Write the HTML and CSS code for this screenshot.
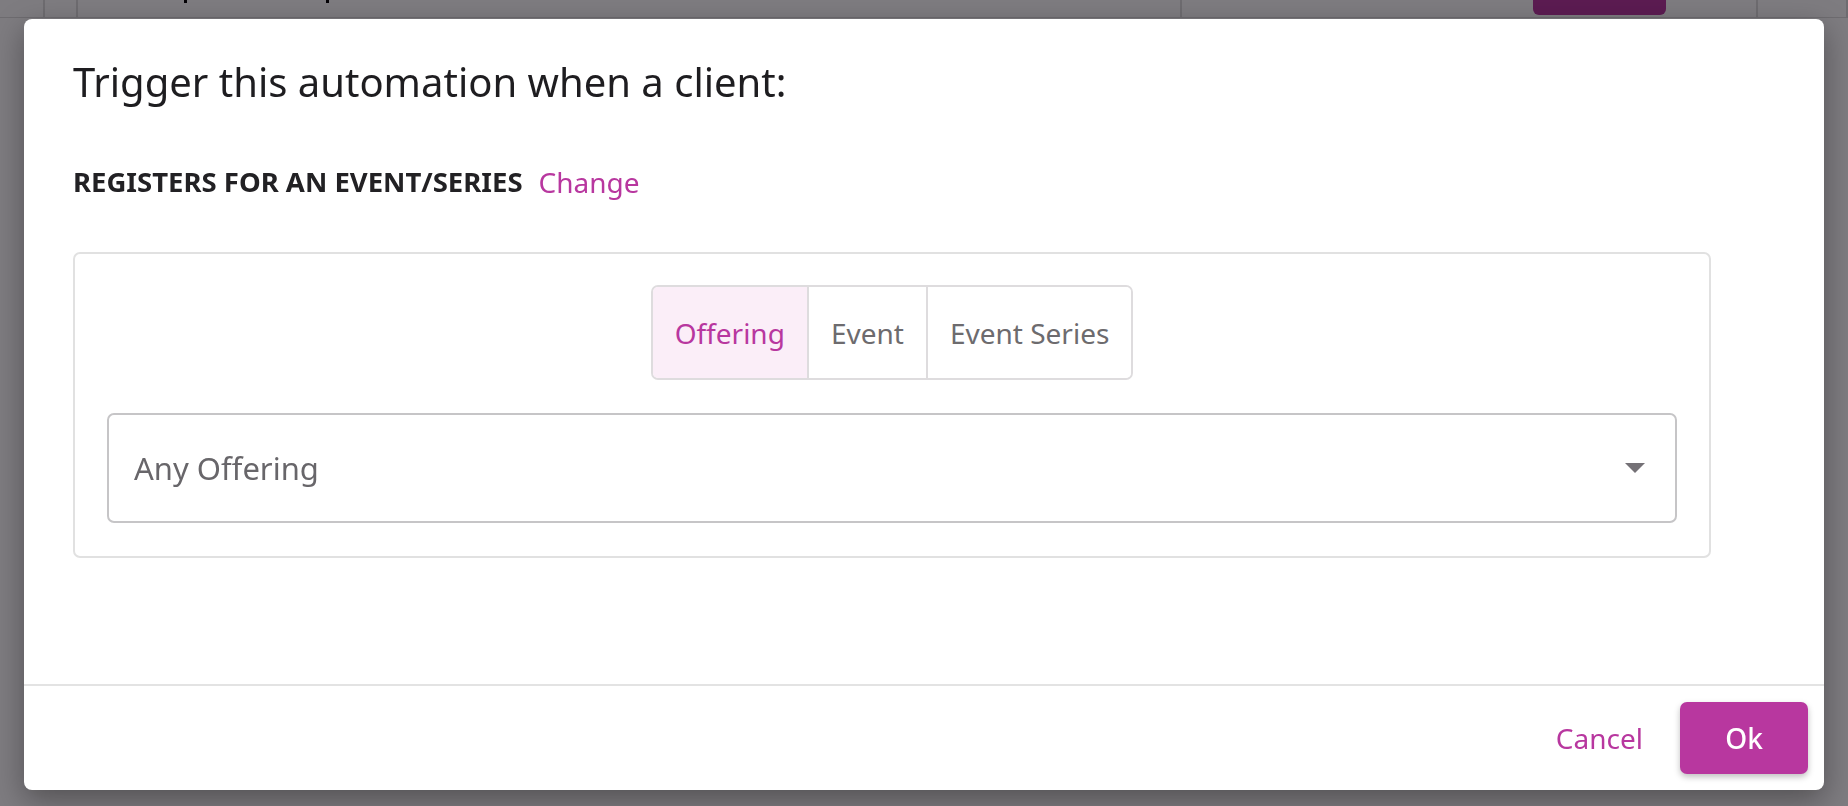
FILE: index.html
```html
<!DOCTYPE html>
<html lang="en">
<head>
    <meta charset="UTF-8">
    <meta name="viewport" content="width=device-width, initial-scale=1.0">
    <title>Trigger automation</title>
    <link rel="stylesheet" href="styles.css">
</head>
<body>
    <!-- Page behind the modal -->
    <div class="page">
        <div class="page-row">
            <div class="cell cell-a"></div>
            <div class="cell cell-a2"></div>
            <div class="cell cell-b">
                <span class="dot dot-1"></span>
                <span class="dot dot-2"></span>
            </div>
            <div class="cell cell-c">
                <span class="page-btn"></span>
            </div>
            <div class="cell cell-d"></div>
        </div>
    </div>

    <!-- Modal -->
    <div class="backdrop">
        <div class="modal">
            <div class="modal-body">
                <h1 class="modal-title">Trigger this automation when a client:</h1>

                <div class="trigger-line">
                    <span class="trigger-name">REGISTERS FOR AN EVENT/SERIES</span>
                    <a href="#" class="link">Change</a>
                </div>

                <div class="card">
                    <div class="segmented">
                        <button class="seg active">Offering</button>
                        <button class="seg">Event</button>
                        <button class="seg">Event Series</button>
                    </div>

                    <div class="select">
                        <span class="select-value">Any Offering</span>
                        <svg class="select-arrow" width="20" height="10" viewBox="0 0 20 10">
                            <path d="M0 0 L20 0 L10 10 Z" fill="#747176"/>
                        </svg>
                    </div>
                </div>
            </div>

            <div class="modal-footer">
                <button class="btn-text">Cancel</button>
                <button class="btn-primary">Ok</button>
            </div>
        </div>
    </div>
</body>
</html>
```

FILE: styles.css
```css
/* General */
body {
    font-family: 'Noto Sans', 'Open Sans', sans-serif;
    margin: 0;
    padding: 0;
    background: #fff;
    height: 100vh;
    overflow: hidden;
}

/* Page behind the overlay */
.page {
    height: 100%;
}

.page-row {
    display: flex;
    height: 17px;
    border-bottom: 1px solid #ddd;
}

.cell {
    border-right: 2px solid #ddd;
    position: relative;
}

.cell-a {
    width: 43px;
}

.cell-a2 {
    width: 31px;
}

.cell-b {
    width: 1102px;
}

.dot {
    position: absolute;
    top: 0;
    width: 3px;
    height: 3px;
    background: #000;
}

.dot-1 {
    left: 106px;
}

.dot-2 {
    left: 248px;
}

.cell-c {
    width: 574px;
}

.page-btn {
    position: absolute;
    left: 351px;
    top: -30px;
    width: 133px;
    height: 45px;
    border-radius: 6px;
    background: #b8379f;
}

.cell-d {
    flex: 1;
}

/* Overlay */
.backdrop {
    position: fixed;
    inset: 0;
    background: rgba(8, 4, 12, 0.52);
    display: flex;
    padding: 19px 24px 16px 24px;
    box-sizing: border-box;
}

.modal {
    flex: 1;
    background: #fff;
    border-radius: 8px;
    display: flex;
    flex-direction: column;
    box-shadow: 0 10px 30px rgba(0, 0, 0, 0.35);
}

.modal-body {
    flex: 1;
    padding: 37px 113px 0 49px;
}

.modal-title {
    margin: 0;
    font-size: 40px;
    line-height: 52px;
    font-weight: 400;
    color: #1e1d20;
}

.trigger-line {
    margin-top: 57px;
    display: flex;
    align-items: center;
    gap: 16px;
    line-height: 34px;
}

.trigger-name {
    font-size: 27.5px;
    font-weight: 700;
    color: #222124;
}

.link {
    font-size: 28px;
    color: #b8379f;
    text-decoration: none;
}

/* Card with the selector */
.card {
    margin-top: 53px;
    border: 2px solid #e1e1e1;
    border-radius: 7px;
    padding: 31px 32px 33px 32px;
    display: flex;
    flex-direction: column;
    align-items: center;
    gap: 33px;
}

.segmented {
    display: flex;
    height: 95px;
    border: 2px solid #dedcde;
    border-radius: 7px;
    overflow: hidden;
    box-sizing: border-box;
}

.seg {
    font-family: inherit;
    font-size: 28px;
    color: #6d6b6e;
    background: #fff;
    border: none;
    border-left: 2px solid #dedcde;
    padding: 0 22px;
    cursor: pointer;
}

.seg:first-child {
    border-left: none;
}

.seg.active {
    background: #fbeef8;
    color: #b8379f;
}

.select {
    align-self: stretch;
    height: 110px;
    box-sizing: border-box;
    border: 2px solid #c6c5c7;
    border-radius: 7px;
    display: flex;
    align-items: center;
    justify-content: space-between;
    padding: 0 30px 0 25px;
}

.select-value {
    font-size: 31px;
    color: #68666a;
}

/* Footer */
.modal-footer {
    border-top: 2px solid #e3e3e3;
    display: flex;
    justify-content: flex-end;
    align-items: center;
    gap: 37px;
    padding: 16px 16px 16px 16px;
}

.btn-text {
    font-family: inherit;
    font-size: 28px;
    color: #b8379f;
    background: none;
    border: none;
    padding: 0;
    cursor: pointer;
}

.btn-primary {
    font-family: inherit;
    font-size: 28px;
    font-weight: 500;
    color: #fff;
    background: #b8379f;
    border: none;
    border-radius: 7px;
    height: 72px;
    width: 128px;
    box-shadow: 0 3px 6px rgba(0, 0, 0, 0.25);
    cursor: pointer;
}
```
